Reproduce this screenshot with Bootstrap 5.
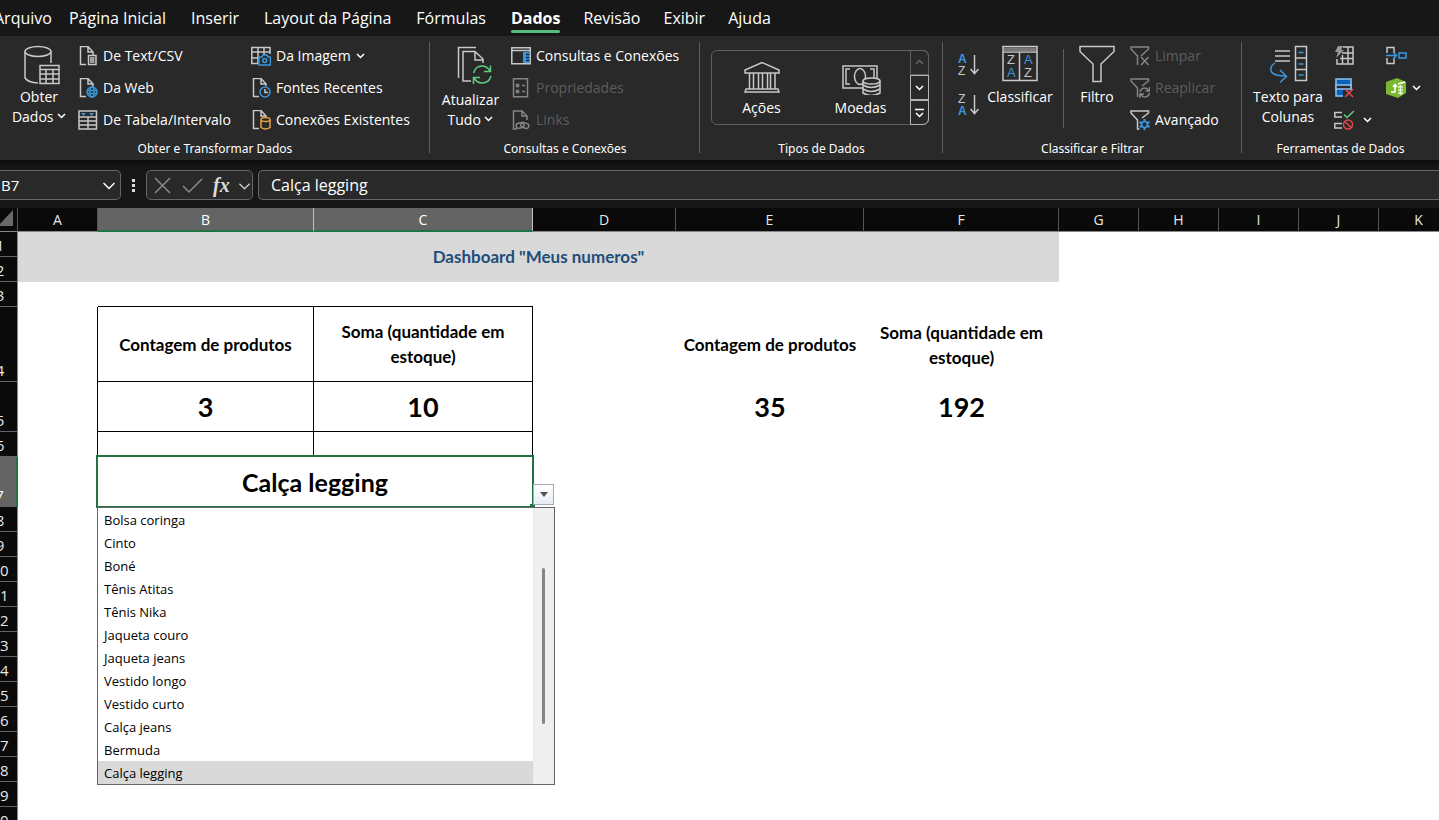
<!DOCTYPE html>
<html lang="pt-BR">
<head>
<meta charset="utf-8">
<meta name="viewport" content="width=device-width, initial-scale=1">
<title>Dashboard "Meus numeros"</title>
<link href="https://cdn.jsdelivr.net/npm/bootstrap@5.3.0/dist/css/bootstrap.min.css" rel="stylesheet">
<style>
  body { font-family: "Open Sans", "Noto Sans", sans-serif; background: #fff; color: #fff; overflow: hidden; }
  button { background: none; border: 0; padding: 0; color: inherit; }
  button:disabled { color: #5d5d5d; }
  svg { fill: none; stroke: #c8c8c8; stroke-width: 1.5; flex: none; }
  svg text { stroke: none; font-family: "Liberation Sans", sans-serif; }
  .blue { stroke: #3a96dd; }
  .tint { fill: #3a96dd; stroke: none; }
  .bg { fill: #292929; }
  .chev { stroke: #fff; }

  .menu-tabs { background: #171717; height: 36px; margin-left: -17px; padding-left: 11px; gap: 25px; font-size: 16px; line-height: 36px; }
  .menu-tabs a { color: #fff; text-decoration: none; position: relative; white-space: nowrap; }
  .menu-tabs a:first-child { margin-right: -8px; }
  .menu-tabs a.active { font-weight: 700; }
  .menu-tabs a.active::after { content: ""; position: absolute; left: 0; right: 0; bottom: 3px; height: 3px; border-radius: 2px; background: #5bbd7b; }
  .menu-tabs a.active ~ a { margin-left: -2px; }

  .ribbon { background: #292929; height: 124px; font-size: 14px; line-height: 20px; }
  .group { position: relative; flex: none; padding-top: 4px; }
  .group + .group::before { content: ""; position: absolute; left: -1px; top: 6px; height: 111px; width: 1px; background: #606060; }
  .group-body { height: 99px; }
  .group-label { font-family: "Noto Sans", sans-serif; font-size: 12px; line-height: 20px; text-align: center; }
  .g-get { width: 430px; } .g-conn { width: 270px; } .g-types { width: 243px; } .g-sort { width: 299px; }
  .g-tools { flex: 1 0 197px; }
  .small-btn { display: flex; align-items: center; gap: 5px; height: 32px; white-space: nowrap; }
  .large-btn { display: flex; flex-direction: column; align-items: center; flex: none; padding-top: 5px; gap: 2px; white-space: nowrap; }
  .large-btn.tall { gap: 5px; }
  .large-btn span svg { vertical-align: 2px; }
  .gallery { margin: 10px 13px 0 11px; height: 75px; border: 1px solid #606060; border-radius: 6px; width: 218px; }
  .gallery-item { display: flex; flex-direction: column; align-items: center; width: 99px; padding-top: 8px; gap: 3px; }
  .gallery-nav { width: 19px; margin: -1px; }
  .gallery-nav button { height: 25px; border: 1px solid #b4b4b4; display: flex; align-items: center; justify-content: center; }
  .gallery-nav button:first-child { border-color: #606060; border-radius: 0 6px 0 0; }
  .gallery-nav button:last-child { border-radius: 0 0 6px 0; }
  .sort-pair { width: 44px; padding: 12px 0 0 14px; }
  .sort-pair button { height: 40px; display: flex; align-items: flex-start; }
  .inner-rule { width: 1px; height: 79px; margin: 9px 8px 0 10px; background: #606060; }

  .formula-bar { height: 48px; background: linear-gradient(#0c0c0c, #171717 8px); padding-top: 10px; }
  .field { height: 30px; background: #292929; border: 1px solid #666; border-radius: 5px; display: flex; align-items: center; }
  .field input { background: none; border: 0; outline: 0; color: #fff; font-size: 16px; padding: 0; min-width: 0; width: 100%; }
  .name-box { width: 121px; border-left: 0; border-radius: 0 5px 5px 0; padding: 0 4px 0 1px; }
  .name-box input { font-size: 15px; }
  .fx-box { width: 107px; margin-right: 5px; gap: 10px; padding-left: 7px; }
  .fx-mark { font: italic 700 20px/20px "Liberation Serif", serif; color: #ddd; width: 25px; text-align: left; }
  .formula { flex: 1; border-right: 0; border-radius: 5px 0 0 5px; padding-left: 12px; }
  .dots { width: 25px; height: 30px; display: flex; justify-content: center; align-items: center; }

  .sheet { table-layout: fixed; width: 1476px; margin-left: -17px; border-collapse: separate; border-spacing: 0; color: #000; font-family: Lato, sans-serif; }
  .sheet th, .sheet td { padding: 0; height: 25px; text-align: center; }
  .sheet th { font-family: "Open Sans", sans-serif; font-weight: 400; font-size: 15px; line-height: 22px; color: #e8e8e8; background: #0a0a0a; border: 0 solid #66646a; border-width: 0 1px 1px 0; vertical-align: bottom; }
  .sheet thead th { height: 24px; padding-top: 2px; font-size: 14px; line-height: 20px; border-right-color: #555; border-bottom-color: #8a878c; vertical-align: top; }
  .sheet tbody th { border-right-color: #8a878c; }
  .sheet thead th.picked { background: #646464; border-right-color: #c0c0c0; border-bottom: 2px solid #217346; color: #fff; }
  .sheet tbody th.picked { background: #646464; border-right: 2px solid #217346; color: #fff; }
  .sheet .r4 { height: 75px; } .sheet .r5 { height: 50px; }
  .sheet .banner { background: #d9d9d9; color: #1f4e79; font-weight: 700; font-size: 17px; }
  .sheet .head { font-weight: 700; font-size: 17px; line-height: 25px; }
  .sheet .num { font-weight: 700; font-size: 27px; line-height: 36px; }
  .sheet .bx { border: 0 solid #000; border-width: 0 1px 1px 0; }
  .sheet .bl { border-right: 1px solid #000; }
  .sheet .bb { border-bottom: 1px solid #000; }
  .active-cell { position: relative; font-weight: 700; font-size: 25px; line-height: 36px; border: 0 solid #fff; border-width: 0 1px 1px 0; }
  .active-cell::before { content: ""; position: absolute; inset: -2px; border: 2px solid #217346; }
  .active-cell::after { content: ""; position: absolute; right: -3px; bottom: -2px; width: 5px; height: 4px; background: #217346; }
  .drop-btn { position: absolute; left: 100%; margin-left: 1px; bottom: 1px; width: 21px; height: 21px; background: linear-gradient(#fff, #e9ecf4); border: 1px solid #a5a9b3; display: flex; align-items: center; justify-content: center; z-index: 2; }
  .drop-list { position: absolute; left: -1px; right: -23px; top: 50px; height: 278px; border: 1px solid #666; background: #fff; display: flex; z-index: 1; }
  .drop-list select { flex: 1; border: 0; border-right: 1px solid #e3ecf6; outline: 0; padding: 0; height: 276px; overflow: hidden; font: 400 13px/23px "Open Sans", sans-serif; color: #000; background: #fff; scrollbar-width: none; }
  .drop-list select::-webkit-scrollbar { display: none; }
  .drop-list option { height: 23px; min-height: 23px; padding: 3px 6px 0; color: #000; }
  .drop-list option:checked { background: #d9d9d9 linear-gradient(#d9d9d9, #d9d9d9); color: #000; }
  .track { width: 20px; background: #efefef; padding: 60px 0 0 8px; }
  .thumb { width: 3px; height: 156px; border-radius: 2px; background: #858585; }
</style>
</head>
<body>
<nav class="menu-tabs d-flex" aria-label="Guias">
  <a href="#">Arquivo</a><a href="#">Página Inicial</a><a href="#">Inserir</a><a href="#">Layout da Página</a><a href="#">Fórmulas</a><a href="#" class="active">Dados</a><a href="#">Revisão</a><a href="#">Exibir</a><a href="#">Ajuda</a>
</nav>

<div class="ribbon d-flex">
  <section class="group g-get">
    <div class="group-body d-flex">
      <button class="large-btn" style="width:78px">
        <svg width="42" height="40" viewBox="0 0 42 40"><ellipse cx="20" cy="6.500" rx="13" ry="5"/><path d="M7 6.500V33q3 4.500 13 5M33 6.500V18"/><path class="bg" d="M22 20.500h19v18H22z"/><path d="M22 24.500h19M22 29h19M22 34h19M28 24v15M35 24v15"/></svg>
        <span>Obter<br>Dados <svg class="chev" width="9" height="9" viewBox="0 0 9 9"><path d="M1 3l3.500 3.500L8 3"/></svg></span>
      </button>
      <div style="width:173px">
        <button class="small-btn"><svg width="20" height="20" viewBox="0 0 20 20"><path d="M8 18.500H2.500v-18H10L15 6v3M10 .5V6h5"/><path d="M10.500 9.500h7.500v9h-7.500zM12 12h4.500M12 14h4.500M12 16h4.500"/></svg>De Text/CSV</button>
        <button class="small-btn"><svg width="20" height="20" viewBox="0 0 20 20"><path d="M8 18.500H2.500v-18H10L15 6v3M10 .5V6h5"/><g class="blue"><circle cx="14" cy="14" r="5"/><ellipse cx="14" cy="14" rx="2" ry="5"/><path d="M9 12.500h10M9 15.500h10"/></g></svg>Da Web</button>
        <button class="small-btn"><svg width="20" height="20" viewBox="0 0 20 20"><path d="M1 1h17.500v18H1zM1 7h17.500M1 11h17.500M1 15h17.500M10 7v12"/><path class="tint" d="M3 3h5L5.500 6zM11 3h5l-2.500 3z"/></svg>De Tabela/Intervalo</button>
      </div>
      <div>
        <button class="small-btn"><svg width="20" height="20" viewBox="0 0 20 20"><path d="M7 17.500H.8v-16H19V8M1 6h18M1 12h7M7 1v16M13 1v8"/><g class="blue"><path class="bg" d="M8 11h3l1-2h4l1 2h2.500v8H8z"/><circle cx="13.700" cy="14.500" r="2"/></g></svg>Da Imagem<svg class="chev" width="9" height="9" viewBox="0 0 9 9"><path d="M1 2l3.500 3.500L8 2"/></svg></button>
        <button class="small-btn"><svg width="20" height="20" viewBox="0 0 20 20"><path d="M8 18.500H2.500v-18H10L15 6v2M10 .5V6h5"/><circle class="bg blue" cx="14" cy="14" r="5"/><path d="M14 11v3.500h3"/></svg>Fontes Recentes</button>
        <button class="small-btn"><svg width="20" height="20" viewBox="0 0 20 20"><path d="M8 18.500H2.500v-18H10L15 6v1M10 .5V6h5"/><g style="stroke:#e8a33d"><path class="bg" d="M10 10v7.500q4.500 3 9 0V10"/><ellipse class="bg" cx="14.500" cy="9.500" rx="4.500" ry="2"/></g></svg>Conexões Existentes</button>
      </div>
    </div>
    <div class="group-label">Obter e Transformar Dados</div>
  </section>

  <section class="group g-conn">
    <div class="group-body d-flex">
      <button class="large-btn tall" style="width:81px">
        <svg width="42" height="40" viewBox="0 0 42 40"><path d="M8.500 33V2.500H26M21 36h-8V6.500h12l8 7.500v4M25 7v8h8"/><g style="stroke:#5fce7a"><path d="M23.500 28q2-7 8.500-7 5 0 8 5M40.500 20.500v6H34M41 31q-2 7-9 7-5 0-8-5M23.500 39v-6.500H30"/></g></svg>
        <span>Atualizar<br>Tudo <svg class="chev" width="9" height="9" viewBox="0 0 9 9"><path d="M1 3l3.500 3.500L8 3"/></svg></span>
      </button>
      <div>
        <button class="small-btn"><svg width="20" height="20" viewBox="0 0 20 20"><path d="M.8 1.800h18.400v16H.8zM1 4.500h18"/><path class="tint" d="M12 6h6.500v11H12z"/><path d="M15 8.500h3M15 11.500h3M15 14.500h3" style="stroke:#123"/></svg>Consultas e Conexões</button>
        <button class="small-btn" disabled><svg width="20" height="20" viewBox="0 0 20 20" style="stroke:#858585"><path d="M2.500 .8h14v18h-14z"/><path d="M5.500 6.500h2v2h-2zM5.500 12.500h2v2h-2zM11 7.500h3M11 13.500h3"/></svg>Propriedades</button>
        <button class="small-btn" disabled><svg width="20" height="20" viewBox="0 0 20 20" style="stroke:#858585"><path d="M6 19H2.500V1H11l5 5v4M11 1v5h5"/><rect x="5" y="13" width="8" height="5" rx="2.500" transform="rotate(-12 9 15)"/><rect x="10" y="13" width="8" height="5" rx="2.500" transform="rotate(20 14 15)"/></svg>Links</button>
      </div>
    </div>
    <div class="group-label">Consultas e Conexões</div>
  </section>

  <section class="group g-types">
    <div class="group-body d-flex">
      <div class="gallery d-flex">
        <button class="gallery-item"><svg width="36" height="36" viewBox="0 0 36 36"><path d="M1 14v-3L18 3.500 35 11v3zM2 30h32l1 3H1zM5.500 14v16M9.500 14v16M14.500 14v16M18.500 14v16M23.500 14v16M26.500 14v16M31 14v16"/></svg>Ações</button>
        <button class="gallery-item"><svg width="40" height="36" viewBox="0 0 40 36"><path d="M23 29H2V7h34v13"/><path d="M9 10H5v15h4M29 10h4v9"/><ellipse cx="19" cy="17.500" rx="5.500" ry="8"/><path class="bg" d="M22 22v12q8 5 17 0V22"/><ellipse class="bg" cx="30.500" cy="22" rx="8.500" ry="3"/><path d="M22 26q8 5 17 0M22 30q8 5 17 0"/></svg>Moedas</button>
        <div class="gallery-nav ms-auto d-flex flex-column">
          <button aria-label="Linha acima" disabled><svg width="9" height="9" viewBox="0 0 9 9" style="stroke:#666"><path d="M1 6l3.500-3.500L8 6"/></svg></button>
          <button aria-label="Linha abaixo"><svg class="chev" width="9" height="9" viewBox="0 0 9 9"><path d="M1 3l3.500 3.500L8 3"/></svg></button>
          <button aria-label="Mais"><svg class="chev" width="9" height="10" viewBox="0 0 9 10"><path d="M0 1.500h9M1 5l3.500 3.500L8 5"/></svg></button>
        </div>
      </div>
    </div>
    <div class="group-label">Tipos de Dados</div>
  </section>

  <section class="group g-sort">
    <div class="group-body d-flex">
      <div class="sort-pair d-flex flex-column">
        <button aria-label="Classificar de A a Z"><svg width="24" height="26" viewBox="0 0 24 26"><text x="1" y="11" font-size="12" font-weight="700" style="fill:#3a96dd">A</text><text x="1" y="23" font-size="12" fill="#c8c8c8">Z</text><path d="M17.500 3v18M13.500 17l4 4.500 4-4.500"/></svg></button>
        <button aria-label="Classificar de Z a A"><svg width="24" height="26" viewBox="0 0 24 26"><text x="1" y="11" font-size="12" fill="#c8c8c8">Z</text><text x="1" y="23" font-size="12" font-weight="700" style="fill:#3a96dd">A</text><path d="M17.500 3v18M13.500 17l4 4.500 4-4.500"/></svg></button>
      </div>
      <button class="large-btn" style="width:66px">
        <svg width="36" height="40" viewBox="0 0 36 40"><path d="M1 1.500h34v34H1zM1 7h34M17.500 7v28.500"/><path d="M2 2.500h32v4H2z" fill="#777" stroke="none"/><g font-size="13" fill="#c8c8c8"><text x="5" y="19">Z</text><text x="22" y="32">Z</text><text x="5" y="32" style="fill:#3a96dd">A</text><text x="22" y="19" style="fill:#3a96dd">A</text></g></svg>
        <span>Classificar</span>
      </button>
      <div class="inner-rule"></div>
      <button class="large-btn" style="width:50px">
        <svg width="36" height="40" viewBox="0 0 36 40"><path d="M1 1.500h34v5L22 19v17.500h-8V19L1 6.500z"/></svg>
        <span>Filtro</span>
      </button>
      <div class="ms-2">
        <button class="small-btn" disabled><svg width="20" height="20" viewBox="0 0 20 20" style="stroke:#858585"><path d="M11 10l7.500-7V1H1v2l6.500 7v9M11 11l7.500 8M18.500 11L11 19"/></svg>Limpar</button>
        <button class="small-btn" disabled><svg width="20" height="20" viewBox="0 0 20 20" style="stroke:#858585"><path d="M12 8l6.500-5V1H1v2l6.500 7v9"/><path d="M10 14q1-4 5-4 2 0 4 3M19.500 9v4h-4M19.500 15q-1 4-5 4-2 0-4-3M10 20v-4h4"/></svg>Reaplicar</button>
        <button class="small-btn"><svg width="20" height="20" viewBox="0 0 20 20"><path d="M12 8l6.500-5V1H1v2l6.500 7v9h2"/><g class="blue"><circle cx="14.500" cy="14.500" r="3"/><path d="M14.500 9v3M14.500 17v3M9.500 12l3 1.500M19.500 12l-3 1.500M9.500 17l3-1.500M19.500 17l-3-1.500" stroke-width="2"/></g></svg>Avançado</button>
      </div>
    </div>
    <div class="group-label">Classificar e Filtrar</div>
  </section>

  <section class="group g-tools">
    <div class="group-body d-flex">
      <button class="large-btn" style="width:92px">
        <svg width="40" height="40" viewBox="0 0 40 40"><path d="M7 6h15M7 11h15M7 16h15M27.500 1.500h11v34h-11zM27.500 13h11M27.500 24.500h11"/><path class="blue" d="M30.500 7.500h5M30.500 19h5M30.500 30h5M7 18q-6 4-3.500 9 3 4 14.500 4M12 25l6.500 6.500-6.500 6"/></svg>
        <span>Texto para<br>Colunas</span>
      </button>
      <div style="width:51px">
        <button class="small-btn" aria-label="Preenchimento Relâmpago"><svg width="20" height="20" viewBox="0 0 20 20"><path d="M9 1h10v17H3v-5M8 7h11M6 12.500h13M8.500 9v9M14 1v17"/><path d="M4 0h5L7 4h3L2 12l2-6H1z" fill="#999" stroke="none"/></svg></button>
        <button class="small-btn" aria-label="Remover Duplicatas"><svg width="20" height="20" viewBox="0 0 20 20"><path d="M2 1h15v17H2z" fill="#0b62b8" stroke="#8cc4f4"/><path class="bg" d="M2 7h15v4H2z" stroke="#8cc4f4"/><path d="M9 12h9v8H9z" fill="#292929" stroke="none"/><path d="M11 11l8 8M19 11l-8 8" stroke="#e8484d"/></svg></button>
        <button class="small-btn" aria-label="Validação de Dados"><svg width="20" height="20" viewBox="0 0 20 20"><path d="M8 7H.8V2.500H8M8 18H.8v-4.500H8"/><path d="M10 4.500l3 3L20 1" stroke="#5fce7a"/><circle cx="14" cy="14.500" r="4.500" stroke="#e8484d"/><path d="M11 11.500l6 6" stroke="#e8484d"/></svg><svg class="chev ms-1" width="9" height="9" viewBox="0 0 9 9"><path d="M1 2l3.500 3.500L8 2"/></svg></button>
      </div>
      <div>
        <button class="small-btn" aria-label="Consolidar"><svg width="22" height="20" viewBox="0 0 22 20"><path d="M2 7V1.500h7V7M2 12v5.500h7V12"/><path class="blue" d="M1 9.500h10M8 6l3.500 3.500L8 13M14 7h7v5h-7z"/></svg></button>
        <button class="small-btn" aria-label="Modelo de Dados"><svg width="22" height="20" viewBox="0 0 22 20"><path d="M1 4L12 0l9 4v11l-8 5L1 16z" fill="#7ab82f" stroke="none"/><path d="M13 6l7-2M6 14h4V7M8 9l2-2.500L12 9" stroke="#fff"/><path d="M13 9h5M13 12h5M13 15h5M15.500 7v10" stroke="#e5f3d2"/></svg><svg class="chev" width="9" height="9" viewBox="0 0 9 9"><path d="M1 2l3.500 3.500L8 2"/></svg></button>
      </div>
    </div>
    <div class="group-label">Ferramentas de Dados</div>
  </section>
</div>

<div class="formula-bar d-flex">
  <div class="field name-box"><input type="text" value="B7" aria-label="Caixa de Nome"><svg class="chev" width="14" height="14" viewBox="0 0 14 14"><path d="M1.500 5L7 10.500 12.500 5"/></svg></div>
  <div class="dots"><svg width="3" height="13" viewBox="0 0 3 13"><path d="M0 0h3v3H0zM0 5h3v3H0zM0 10h3v3H0z" fill="#ddd" stroke="none"/></svg></div>
  <div class="field fx-box">
    <button class="d-flex" aria-label="Cancelar"><svg width="17" height="17" viewBox="0 0 17 17" style="stroke:#8a8a8a"><path d="M1 1l15 15M16 1L1 16"/></svg></button>
    <button class="d-flex" aria-label="Inserir"><svg width="22" height="17" viewBox="0 0 22 17" style="stroke:#8a8a8a"><path d="M2 9l6 6L21 2"/></svg></button>
    <button class="d-flex align-items-center" aria-label="Inserir Função"><span class="fx-mark">fx</span><svg width="13" height="13" viewBox="0 0 14 14"><path d="M1.500 5L7 10.500 12.500 5"/></svg></button>
  </div>
  <div class="field formula"><input type="text" value="Calça legging" aria-label="Barra de Fórmulas"></div>
</div>

<table class="sheet">
  <colgroup><col style="width:35px"><col style="width:80px"><col style="width:216px"><col style="width:219px"><col style="width:143px"><col style="width:188px"><col style="width:195px"><col style="width:80px"><col style="width:80px"><col style="width:80px"><col style="width:80px"><col style="width:80px"></colgroup>
  <thead>
    <tr><th aria-label="Selecionar tudo"><svg class="d-block ms-auto me-1" width="15" height="16" viewBox="0 0 15 16"><path d="M15 0v16H0z" fill="#6a6a6a" stroke="none"/></svg></th><th>A</th><th class="picked">B</th><th class="picked">C</th><th>D</th><th>E</th><th>F</th><th>G</th><th>H</th><th>I</th><th>J</th><th>K</th></tr>
  </thead>
  <tbody>
    <tr><th>1</th><td class="banner" colspan="6" rowspan="2">Dashboard "Meus numeros"</td><td colspan="5"></td></tr>
    <tr><th>2</th><td colspan="5"></td></tr>
    <tr><th>3</th><td></td><td class="bb"></td><td class="bb"></td><td colspan="8"></td></tr>
    <tr><th class="r4">4</th><td class="bl"></td><td class="bx head">Contagem de produtos</td><td class="bx head">Soma (quantidade em<br>estoque)</td><td></td><td class="head">Contagem de produtos</td><td class="head">Soma (quantidade em<br>estoque)</td><td colspan="5"></td></tr>
    <tr><th class="r5">5</th><td class="bl"></td><td class="bx num">3</td><td class="bx num">10</td><td></td><td class="num">35</td><td class="num">192</td><td colspan="5"></td></tr>
    <tr><th>6</th><td class="bl"></td><td class="bx"></td><td class="bx"></td><td colspan="8"></td></tr>
    <tr><th class="r5 picked">7</th><td></td>
      <td class="active-cell" colspan="2">Calça legging
        <button class="drop-btn" aria-label="Abrir lista"><svg width="8" height="5" viewBox="0 0 8 5"><path d="M0 0h8L4 5z" fill="#555" stroke="none"/></svg></button>
        <div class="drop-list">
          <select size="12" aria-label="Produto">
            <option>Bolsa coringa</option><option>Cinto</option><option>Boné</option><option>Tênis Atitas</option><option>Tênis Nika</option><option>Jaqueta couro</option><option>Jaqueta jeans</option><option>Vestido longo</option><option>Vestido curto</option><option>Calça jeans</option><option>Bermuda</option><option selected>Calça legging</option>
          </select>
          <div class="track"><div class="thumb"></div></div>
        </div>
      </td><td colspan="8"></td></tr>
    <tr><th>8</th><td colspan="11"></td></tr>
    <tr><th>9</th><td colspan="11"></td></tr>
    <tr><th>10</th><td colspan="11"></td></tr>
    <tr><th>11</th><td colspan="11"></td></tr>
    <tr><th>12</th><td colspan="11"></td></tr>
    <tr><th>13</th><td colspan="11"></td></tr>
    <tr><th>14</th><td colspan="11"></td></tr>
    <tr><th>15</th><td colspan="11"></td></tr>
    <tr><th>16</th><td colspan="11"></td></tr>
    <tr><th>17</th><td colspan="11"></td></tr>
    <tr><th>18</th><td colspan="11"></td></tr>
    <tr><th>19</th><td colspan="11"></td></tr>
    <tr><th>20</th><td colspan="11"></td></tr>
  </tbody>
</table>
<script src="https://cdn.jsdelivr.net/npm/bootstrap@5.3.0/dist/js/bootstrap.bundle.min.js"></script>
</body>
</html>
